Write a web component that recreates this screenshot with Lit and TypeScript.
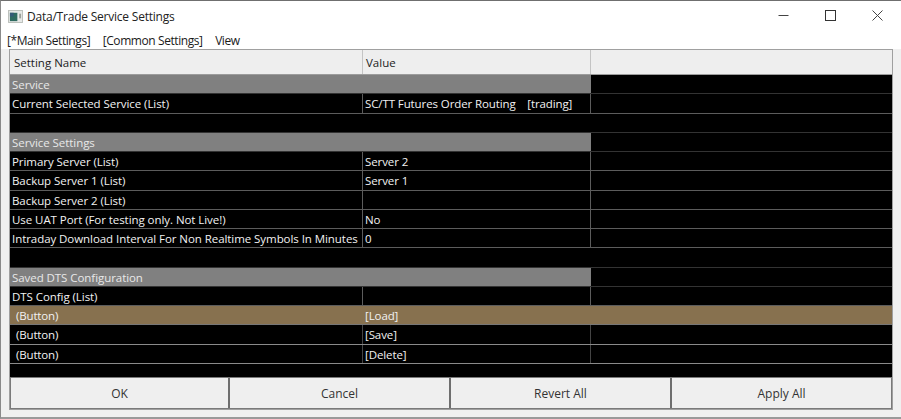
import { LitElement, html, css, nothing } from "lit";
import { customElement } from "lit/decorators.js";

type Row = { name?: string; value?: string; kind?: "section" | "blank" | "hot" | "btn" };
const rows: Row[] = [
  { name: "Service", kind: "section" },
  { name: "Current Selected Service (List)", value: "SC/TT Futures Order Routing    [trading]" },
  { kind: "blank" },
  { name: "Service Settings", kind: "section" },
  { name: "Primary Server (List)", value: "Server 2" },
  { name: "Backup Server 1 (List)", value: "Server 1" },
  { name: "Backup Server 2 (List)", value: "" },
  { name: "Use UAT Port (For testing only. Not Live!)", value: "No" },
  { name: "Intraday Download Interval For Non Realtime Symbols In Minutes", value: "0" },
  { kind: "blank" },
  { name: "Saved DTS Configuration", kind: "section" },
  { name: "DTS Config (List)", value: "" },
  { name: "(Button)", value: "[Load]", kind: "hot" },
  { name: "(Button)", value: "[Save]", kind: "btn" },
  { name: "(Button)", value: "[Delete]", kind: "btn" },
];

@customElement("app-root")
export class AppRoot extends LitElement {
  static styles = css`
    :host {
      display: block;
      width: 901px;
      height: 419px;
      overflow: hidden;
      font-family: "Open Sans", "Noto Sans", sans-serif;
      font-size: 11.5px;
      color: #1a1a1a;
    }
    .window {
      box-sizing: border-box;
      width: 901px;
      height: 419px;
      border-top: 1px solid #6f6f6f;
      border-left: 1px solid #8a8a8a;
      border-bottom: 2px solid #9a9a9a;
      background: #f0f0f0;
      display: flex;
      flex-direction: column;
    }
    .titlebar {
      height: 30px;
      flex: none;
      background: #fff;
      display: flex;
      align-items: center;
      padding-left: 7px;
    }
    .app-icon { width: 15px; height: 13px; margin-right: 4px; flex: none; }
    .title { font-size: 12px; color: #222; flex: 1; letter-spacing: -0.22px; }
    .ctl { width: 47px; height: 28px; margin-bottom: 2px; display: flex; align-items: center; justify-content: center; flex: none; }
    .menu {
      height: 18px;
      flex: none;
      background: #fff;
      display: flex;
      align-items: center;
      gap: 12.5px;
      padding-left: 6px;
      font-size: 12px;
      letter-spacing: -0.42px;
    }
    .body { flex: 1; padding: 0 8px 0 8px; display: flex; flex-direction: column; min-height: 0; }
    .panel {
      border: 1px solid #a0a0a0;
      flex: none;
      height: 361px;
      box-sizing: border-box;
      display: flex;
      flex-direction: column;
      background: #000;
    }
    .row {
      display: grid;
      grid-template-columns: 353px 228px 1fr;
      height: 19.25px;
      box-sizing: border-box;
      border-bottom: 1px solid #5c5c5c;
      background: #000;
      color: #f2f2f2;
      flex: none;
    }
    .cell {
      box-sizing: border-box;
      padding-left: 2px;
      line-height: 20px;
      white-space: pre;
      overflow: hidden;
      border-right: 1px solid #5c5c5c;
    }
    .cell:last-child { border-right: none; }
    .name { letter-spacing: -0.06px; }
    .value { letter-spacing: -0.1px; }
    .head {
      height: 25px;
      background: #eeeeee;
      color: #222;
      border-bottom: 1px solid #9c9c9c;
    }
    .head .cell { line-height: 25px; padding-left: 4px; border-right-color: #c4c4c4; }
    .head .cell:nth-child(2) { padding-left: 3px; }
    .section { border-bottom-color: #333; }
    .section .a, .section .b { background: #808080; color: #e8e8e8; }
    .section .a { border-right: none; }
    .section .b { border-right: 1px solid #808080; }
    .section .c { background: #000; }
    .blank { border-bottom-color: #333; }
    .blank .cell { border-right-color: transparent; }
    .hot { background: #87714f; border-bottom-color: #777; }
    .hot .cell { border-right-color: transparent; }
    .btn { border-bottom-color: #8a8a8a; }
    .btn .cell { border-right-color: #444; }
    .indent { padding-left: 6px; letter-spacing: -0.15px; }
    .filler { flex: 1; background: #000; }
    .buttons {
      flex: none;
      height: 32px;
      display: grid;
      grid-template-columns: 217px 219px 219px 1fr;
      gap: 2px;
      background: #6e6e6e;
      border: 1px solid #7a7a7a;
      box-sizing: border-box;
    }
    .buttons div {
      background: #efefef;
      display: flex;
      align-items: center;
      justify-content: center;
      font-size: 12px;
      color: #333;
    }
  `;

  private renderRow(r: Row) {
    const cls = r.kind ?? "";
    const indent = r.kind === "hot" || r.kind === "btn";
    return html`<div class="row ${cls}">
      <div class="cell name a ${indent ? "indent" : ""}">${r.name ?? nothing}</div>
      <div class="cell value b">${r.value ?? nothing}</div>
      <div class="cell c"></div>
    </div>`;
  }

  render() {
    return html`<div class="window">
      <div class="titlebar">
        <svg class="app-icon" viewBox="0 0 16 14">
          <rect x="0.5" y="0.5" width="15" height="13" fill="#e6e8e6" stroke="#b9bdb9" />
          <rect x="2" y="3" width="8" height="9" fill="#2f6b60" />
          <rect x="2" y="3" width="4" height="4" fill="#355a78" />
          <rect x="12" y="4" width="2" height="5" fill="#9aa09a" />
        </svg>
        <div class="title">Data/Trade Service Settings</div>
        <div class="ctl">
          <svg width="11" height="11" viewBox="0 0 11 11"><path d="M0.5 5.5H10.5" stroke="#444" fill="none" /></svg>
        </div>
        <div class="ctl">
          <svg width="11" height="11" viewBox="0 0 11 11"><rect x="0.5" y="0.5" width="10" height="10" stroke="#333" fill="none" /></svg>
        </div>
        <div class="ctl">
          <svg width="11" height="11" viewBox="0 0 11 11"><path d="M0.5 0.5L10.5 10.5M10.5 0.5L0.5 10.5" stroke="#444" fill="none" /></svg>
        </div>
      </div>
      <div class="menu"><span>[*Main Settings]</span><span>[Common Settings]</span><span>View</span></div>
      <div class="body">
        <div class="panel">
          <div class="row head">
            <div class="cell">Setting Name</div>
            <div class="cell">Value</div>
            <div class="cell"></div>
          </div>
          ${rows.map((r) => this.renderRow(r))}
          <div class="filler"></div>
          <div class="buttons">
            <div>OK</div><div>Cancel</div><div>Revert All</div><div>Apply All</div>
          </div>
        </div>
      </div>
    </div>`;
  }
}
